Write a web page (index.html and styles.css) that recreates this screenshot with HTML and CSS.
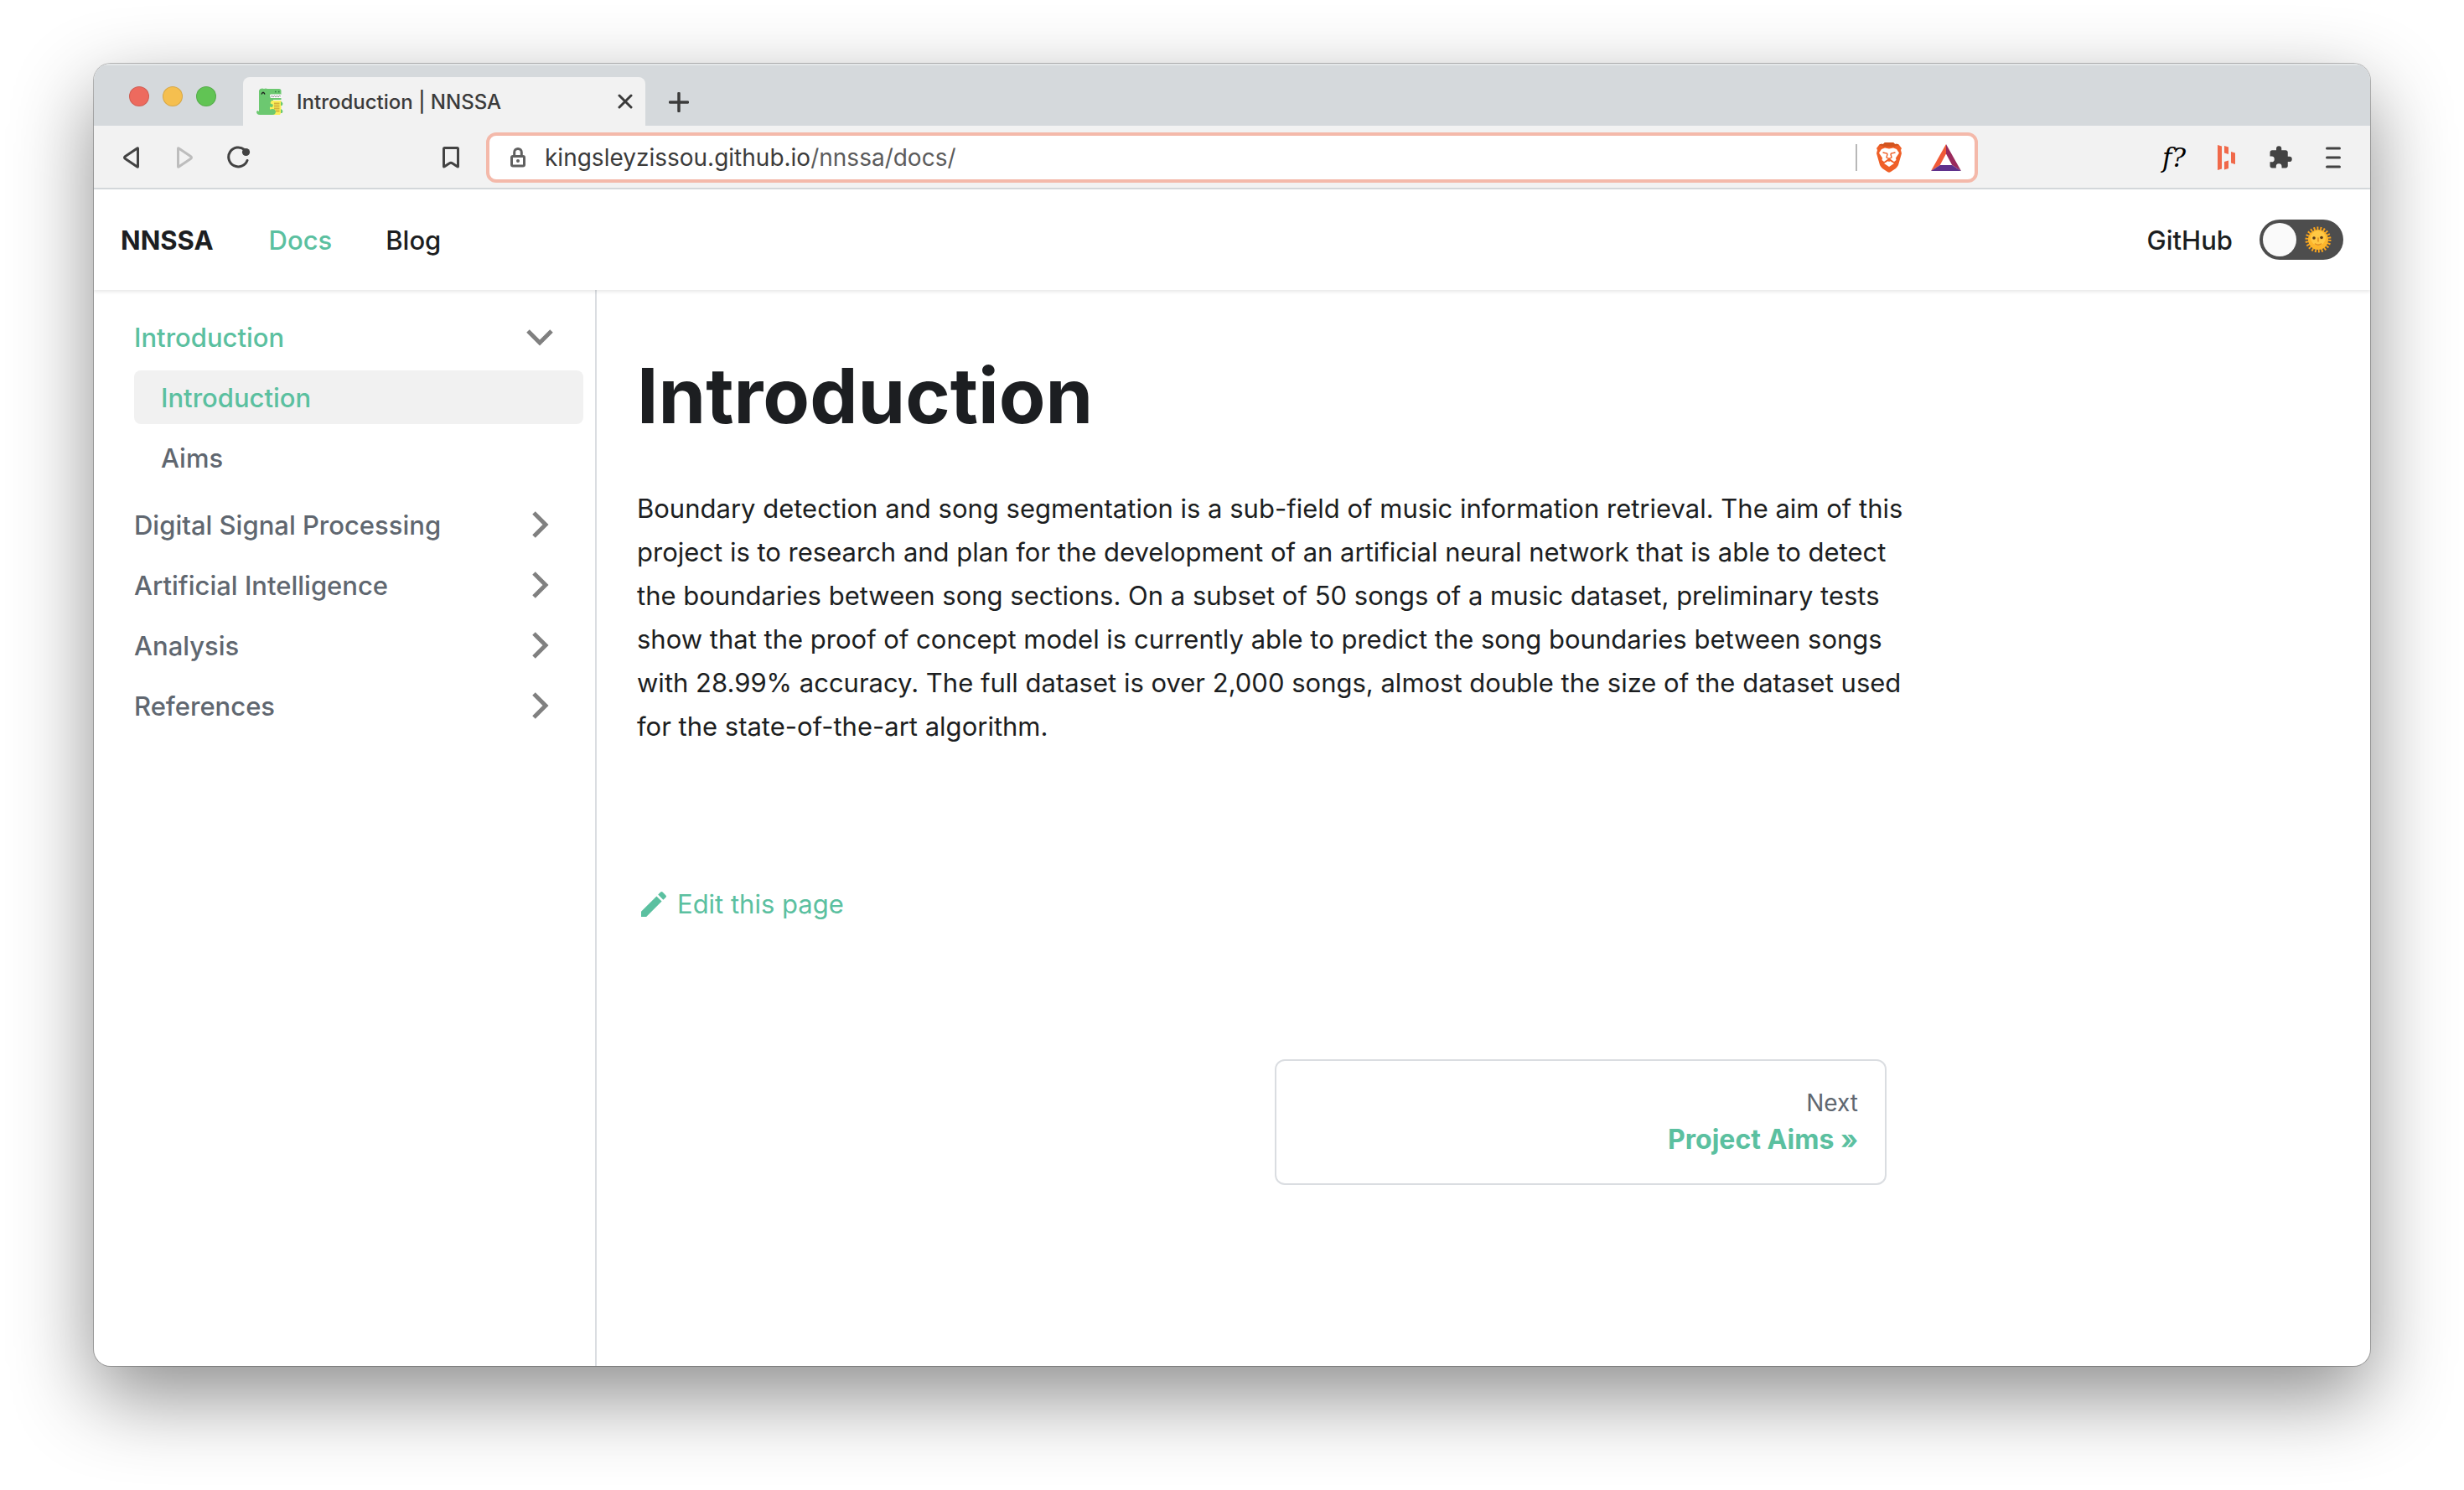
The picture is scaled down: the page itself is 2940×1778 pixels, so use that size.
FILE: index.html
```html
<!DOCTYPE html>
<html lang="en">
<head>
<meta charset="utf-8">
<title>Introduction | NNSSA</title>
<link rel="stylesheet" href="styles.css">
</head>
<body>
<div class="window">
  <div class="tabstrip">
    <div class="lights">
      <button class="light light-close" aria-label="Close window"></button>
      <button class="light light-min" aria-label="Minimise window"></button>
      <button class="light light-max" aria-label="Zoom window"></button>
    </div>
    <div class="tab">
      <svg class="favicon" viewBox="0 0 32 32" aria-hidden="true">
        <path d="M3 3l1.500-2L7 .5l2 .5 2-.5 2 .5h14q2.500 0 2.500 2.500V8H17v4h12.500v2H20v18H4q-4 0-4-4l1.500-1L3 28z" fill="#6cc870"/>
        <path d="M17 7.500h12.500v4.500H18q-2 0-2-2.200t1-2.300z" fill="#fff"/>
        <path d="M17 11q1.500-3.500 3 0 1.500-3.500 3 0 1.500-3.500 3 0 1.500-3.500 3-1" fill="none" stroke="#777" stroke-width=".8"/>
        <path d="M6 7.500q2-4.500 4 0" fill="none" stroke="#1c1c1c" stroke-width="1.400"/>
        <path d="M22 4.500h1.500M26 4.500h1.500" stroke="#2c7a3c" stroke-width="1.500"/>
        <path d="M18 15h11.500v14L28 32H16V19z" fill="#fbf05a"/>
        <path d="M21 18.500h6.500M21 21.500h6.500M21 24.500h6.500M23 27.500h4.500" stroke="#d5b23c" stroke-width="1.800"/>
        <path d="M16 18l4 2-1 3-3-.5zM15 26q7-3 8 2 0 4-4 4h-4zM29 16q4 2 1.500 5H29zM29 25q4 2 1.500 5H29z" fill="#6cc870"/>
      </svg>
      <span class="tab-title">Introduction | NNSSA</span>
      <button class="icon-button" aria-label="Close tab">
        <svg width="18" height="18" viewBox="0 0 18 18"><path d="M2 2l14 14M16 2L2 16" stroke="#3b3b3b" stroke-width="3" stroke-linecap="round"/></svg>
      </button>
    </div>
    <button class="icon-button new-tab" aria-label="New tab">
      <svg width="24" height="24" viewBox="0 0 24 24"><path d="M12 1.500v21M1.500 12h21" stroke="#3b3b3b" stroke-width="3.500" stroke-linecap="round"/></svg>
    </button>
  </div>

  <div class="toolbar">
    <div class="history">
      <button class="icon-button" aria-label="Back"><svg width="24" height="28" viewBox="0 0 24 28"><path d="M19.500 3.200v21.600q0 .8-.8.3L4.200 15.200q-1.400-1.200 0-2.400L18.700 2.900q.8-.5.8.3z" fill="none" stroke="#434343" stroke-width="3" stroke-linejoin="round"/></svg></button>
      <button class="icon-button" aria-label="Forward" disabled><svg width="24" height="28" viewBox="0 0 24 28"><path d="M4.500 3.200v21.600q0 .8.800.3l14.500-9.900q1.400-1.200 0-2.400L5.300 2.900q-.8-.5-.8.3z" fill="none" stroke="#bdbdbd" stroke-width="3" stroke-linejoin="round"/></svg></button>
      <button class="icon-button" aria-label="Reload"><svg width="28" height="28" viewBox="0 0 28 28"><path d="M20.500 4.500A11.500 11.500 0 1 0 24 17.500" fill="none" stroke="#434343" stroke-width="3" stroke-linecap="round"/><circle cx="22.500" cy="7.500" r="4.600" fill="#434343"/></svg></button>
    </div>
    <button class="icon-button bookmark" aria-label="Bookmark"><svg width="24" height="28" viewBox="0 0 24 28"><path d="M3.500 3.500q0-1 1-1h15q1 0 1 1v21q0 .8-.8.300L14 21q-2-1.500-4 0l-5.700 3.800q-.8.500-.8-.3z" fill="none" stroke="#434343" stroke-width="3" stroke-linejoin="round"/></svg></button>
    <div class="address">
      <svg width="20" height="26" viewBox="0 0 20 26" aria-hidden="true"><rect x="2.500" y="11.500" width="15" height="11.500" rx="1.500" fill="none" stroke="#606060" stroke-width="3"/><path d="M5.700 11V6.700a4.300 4.300 0 0 1 8.600 0V11" fill="none" stroke="#606060" stroke-width="3"/><circle cx="10" cy="17" r="2" fill="#606060"/></svg>
      <div class="url"><span class="host">kingsleyzissou.github.io</span>/nnssa/docs/</div>
      <div class="shields">
        <svg width="32" height="36" viewBox="0 0 32 36" role="img" aria-label="Brave Shields"><path d="M9 2l2-2h10l2 2q3-1 5 1l3 4-1 2 1 4-4 14q-1 2-3 4l-6 4q-2 1.500-4 0l-6-4q-2-2-3-4L1 13l1-4-1-2 3-4q2-2 5-1z" fill="#ef5f27"/><path d="M9 2l2-2h10l2 2q3-1 5 1l-6 2H10L4 3q2-2 5-1z" fill="#d2541f"/><path d="M11 6.500l5 1 5-1 4 1.500 3 4.500-4 6 .5 2.500-2.500 2-5-3.500q-1-.700-2 0L10 23l-2.500-2L8 18.500l-4-6L7 8zM10 25l6-3.500 6 3.500-6 4z" fill="#fff"/><path d="M8.500 12l5 1 .5 1-1 4 3 1.500 3-1.500-1-4 .5-1 5-1M16 19v4" fill="none" stroke="#ef5f27" stroke-width="1.400"/></svg>
        <svg width="36" height="32" viewBox="0 0 36 32" role="img" aria-label="Brave Rewards"><path d="M18 0v11.500L10.800 25 0 32z" fill="#f05a37"/><path d="M18 0l18 32-10.800-7L18 11.500z" fill="#9a2a5c"/><path d="M0 32l10.800-7h14.400L36 32z" fill="#5f318c"/></svg>
      </div>
    </div>
    <div class="extensions">
      <button class="icon-button font-ext" aria-label="Font finder"><i>f?</i></button>
      <button class="icon-button" aria-label="Highlights"><svg width="22" height="30" viewBox="0 0 22 30"><path d="M0 0l5 1.500v27L0 30zM8 1l5 1.500V11L8 9.500zM8 20l5-1.500V28l-5 1.500zM16 8l5 1.500V23l-5-1.500z" fill="#f0694a"/></svg></button>
      <button class="icon-button" aria-label="Extensions"><svg width="30" height="30" viewBox="0 0 24 24"><path d="M20.500 11H19V7c0-1.100-.9-2-2-2h-4V3.500a2.500 2.500 0 0 0-5 0V5H4c-1.100 0-2 .9-2 2v3.800h1.500a2.700 2.700 0 0 1 0 5.400H2V20c0 1.100.9 2 2 2h3.800v-1.500a2.700 2.700 0 0 1 5.400 0V22H17c1.100 0 2-.9 2-2v-4h1.500a2.500 2.500 0 0 0 0-5z" fill="#434343"/></svg></button>
      <button class="icon-button" aria-label="Menu"><svg width="20" height="26" viewBox="0 0 20 26"><path d="M2.500 2h15M2.500 13h15M2.500 24h15" stroke="#434343" stroke-width="3" stroke-linecap="round"/></svg></button>
    </div>
  </div>

  <header class="navbar">
    <a class="brand" href="#">NNSSA</a>
    <a class="nav-link active" href="#">Docs</a>
    <a class="nav-link" href="#">Blog</a>
    <a class="nav-link github" href="#">GitHub</a>
    <label class="toggle">
      <input type="checkbox" aria-label="Dark mode">
      <svg width="32" height="32" viewBox="0 0 32 32" aria-hidden="true"><circle cx="16" cy="16" r="13.500" fill="none" stroke="#fba51d" stroke-width="4" stroke-dasharray="1.900 1.955"/><circle cx="16" cy="16" r="12" fill="#fdb52a"/><circle cx="16" cy="14" r="9" fill="#ffc844"/><circle cx="11" cy="14" r="1.800" fill="#5a3a1a"/><circle cx="20" cy="13.500" r="1.800" fill="#5a3a1a"/><path d="M16 14v4M12.500 21q3.500 2.500 7 0" fill="none" stroke="#e08a20" stroke-width="1.400" stroke-linecap="round"/></svg>
    </label>
  </header>

  <div class="page">
    <nav class="sidebar" aria-label="Docs">
      <ul class="menu">
        <li>
          <a class="menu-link active" href="#">Introduction<svg class="chevron" width="32" height="22" viewBox="0 0 32 22"><path d="M2 4l14 14L30 4" fill="none" stroke="#808080" stroke-width="5"/></svg></a>
          <ul class="menu submenu">
            <li><a class="menu-link active current" href="#">Introduction</a></li>
            <li><a class="menu-link" href="#">Aims</a></li>
          </ul>
        </li>
        <li><a class="menu-link" href="#">Digital Signal Processing<svg class="chevron" width="32" height="32" viewBox="0 0 32 32"><path d="M9 2l14 14L9 30" fill="none" stroke="#808080" stroke-width="5"/></svg></a></li>
        <li><a class="menu-link" href="#">Artificial Intelligence<svg class="chevron" width="32" height="32" viewBox="0 0 32 32"><path d="M9 2l14 14L9 30" fill="none" stroke="#808080" stroke-width="5"/></svg></a></li>
        <li><a class="menu-link" href="#">Analysis<svg class="chevron" width="32" height="32" viewBox="0 0 32 32"><path d="M9 2l14 14L9 30" fill="none" stroke="#808080" stroke-width="5"/></svg></a></li>
        <li><a class="menu-link" href="#">References<svg class="chevron" width="32" height="32" viewBox="0 0 32 32"><path d="M9 2l14 14L9 30" fill="none" stroke="#808080" stroke-width="5"/></svg></a></li>
      </ul>
    </nav>
    <main class="content">
      <div class="doc">
        <article>
          <h1>Introduction</h1>
          <p>Boundary detection and song segmentation is a sub-field of music information retrieval. The aim of this project is to research and plan for the development of an artificial neural network that is able to detect the boundaries between song sections. On a subset of 50 songs of a music dataset, preliminary tests show that the proof of concept model is currently able to predict the song boundaries between songs with 28.99% accuracy. The full dataset is over 2,000 songs, almost double the size of the dataset used for the state-of-the-art algorithm.</p>
        </article>
        <a class="edit" href="#"><svg width="40" height="40" viewBox="0 0 40 40" aria-hidden="true"><path d="M5 28.800V35h6.200l18.400-18.400-6.200-6.200zM34.500 11.800a1.700 1.700 0 0 0 0-2.400l-3.900-3.900a1.700 1.700 0 0 0-2.400 0l-3 3 6.200 6.200z" fill="#5bc0a0"/></svg>Edit this page</a>
        <nav class="pagination" aria-label="Docs pages">
          <a class="next" href="#"><span class="sublabel">Next</span><span class="label">Project Aims »</span></a>
        </nav>
      </div>
    </main>
  </div>
</div>
</body>
</html>
```
FILE: styles.css
```css
* { box-sizing: border-box; }

body {
  margin: 0;
  min-height: 100vh;
  display: flex;
  padding: 76px 112px 148px;
  background: #fff;
  color: #1c1e21;
  font-family: Inter, "Liberation Sans", sans-serif;
  font-size: 31px;
}

a { color: inherit; text-decoration: none; }

svg { display: block; flex: none; }

.icon-button {
  display: block;
  flex: none;
  margin: 0;
  padding: 0;
  border: 0;
  background: none;
}

.window {
  flex: 1;
  display: flex;
  flex-direction: column;
  border-radius: 20px;
  overflow: hidden;
  background: #fff;
  box-shadow: 0 0 0 1px rgba(0, 0, 0, .25), 0 36px 96px rgba(0, 0, 0, .45);
}

.tabstrip {
  display: flex;
  align-items: flex-end;
  height: 74px;
  background: #d5d9dc;
  box-shadow: inset 0 2px 0 #e4e7e9;
}

.lights {
  display: flex;
  gap: 16px;
  width: 178px;
  padding: 0 0 23px 42px;
}

.light {
  width: 24px;
  height: 24px;
  padding: 0;
  border: 1px solid rgba(0, 0, 0, .12);
  border-radius: 50%;
}

.light-close { background: #ed6a5e; }
.light-min { background: #f5bf4f; }
.light-max { background: #61c454; }

.tab {
  display: flex;
  align-items: center;
  width: 480px;
  height: 58px;
  padding: 0 15px 0 16px;
  border-radius: 8px 8px 0 0;
  background: #f2f2f2;
}

.favicon { width: 32px; height: 32px; }

.tab-title {
  flex: 1;
  margin-left: 16px;
  color: #3b3b3b;
  font-size: 24px;
  font-weight: 500;
}

.new-tab { padding: 0 0 16px 28px; }

.toolbar {
  display: flex;
  align-items: center;
  height: 76px;
  padding-top: 2px;
  border-bottom: 2px solid #d5d9dc;
  background: #f2f2f2;
}

.history {
  display: flex;
  gap: 39px;
  width: 414px;
  padding-left: 33px;
}

.bookmark { width: 54px; }

.address {
  flex: 1;
  display: flex;
  align-items: center;
  height: 60px;
  padding: 0 16px 0 24px;
  border: 4px solid #f4b9aa;
  border-radius: 12px;
  background: #fff;
}

.url {
  flex: 1;
  margin-left: 22px;
  color: #5c5c5c;
  font-size: 28px;
}

.host { color: #3b3b3b; }

.shields {
  display: flex;
  align-items: center;
  gap: 34px;
  height: 32px;
  padding-left: 22px;
  border-left: 2px solid #b8b8b8;
}

.extensions {
  display: flex;
  align-items: center;
  justify-content: flex-end;
  gap: 38px;
  width: 468px;
  padding-right: 34px;
}

.font-ext {
  color: #000;
  font-family: "DejaVu Serif", serif;
  font-size: 31px;
  line-height: 36px;
}

.navbar {
  position: relative;
  display: flex;
  align-items: center;
  height: 120px;
  padding: 0 32px;
  box-shadow: 0 2px 4px rgba(0, 0, 0, .1);
  font-weight: 500;
}

.brand { margin-right: 66px; font-weight: 700; }
.nav-link { margin-right: 64px; }
.github { margin: 0 32px 0 auto; }
.active { color: #5bc0a0; }

.toggle {
  display: flex;
  align-items: center;
  gap: 10px;
  width: 100px;
  height: 48px;
  padding: 0 4px;
  border-radius: 24px;
  background: #4d4d4d;
}

.toggle input {
  appearance: none;
  width: 40px;
  height: 40px;
  margin: 0;
  border-radius: 50%;
  background: #fafafa;
}

.page { flex: 1; display: flex; }

.sidebar {
  flex: none;
  width: 600px;
  padding: 24px 14px 16px 16px;
  border-right: 2px solid #dadde1;
}

.menu {
  display: flex;
  flex-direction: column;
  gap: 8px;
  margin: 0;
  padding: 0;
  list-style: none;
}

.submenu { margin: 8px 0 8px 32px; }

.menu-link {
  display: flex;
  align-items: center;
  justify-content: space-between;
  height: 64px;
  padding: 0 32px;
  border-radius: 8px;
  color: #606770;
  font-weight: 500;
}

.menu-link.active { color: #5bc0a0; }
.menu-link.current { background: #f1f1f1; }
.chevron { margin-right: 4px; }

.content {
  flex: 1;
  display: grid;
  grid-template-columns: 3fr 1fr;
  gap: 32px;
  padding: 64px 48px 0;
}

h1 {
  margin: 0 0 47px;
  font-size: 91px;
  line-height: 124px;
  font-weight: 700;
}

/* The measure runs slightly into the column gap. */
p { margin: 0 -24px 0 0; line-height: 52px; }

.edit {
  display: flex;
  align-items: center;
  gap: 8px;
  margin-top: 160px;
  color: #5bc0a0;
  line-height: 52px;
}

.pagination { display: flex; justify-content: flex-end; margin-top: 159px; }

.next {
  display: flex;
  flex-direction: column;
  width: 730px;
  padding: 32px 32px 26px;
  border: 2px solid #dadde1;
  border-radius: 12px;
  text-align: right;
}

.sublabel { color: #606770; font-size: 28px; line-height: 36px; }
.label { color: #5bc0a0; font-size: 32px; line-height: 52px; font-weight: 700; }
```
